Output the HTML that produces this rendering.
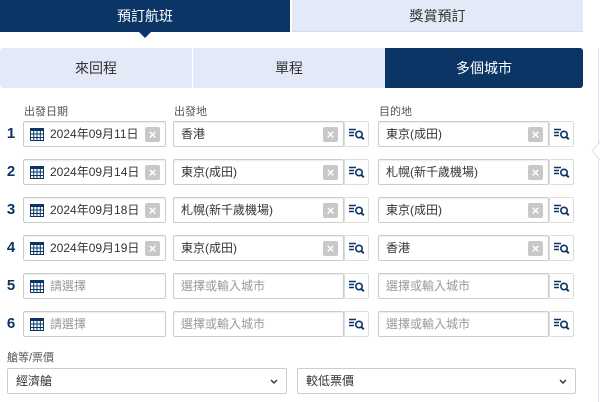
<!DOCTYPE html>
<html><head><meta charset="utf-8"><style>
*{box-sizing:border-box;margin:0;padding:0}
body{width:600px;height:402px;overflow:hidden;background:#fff;font-family:"Liberation Sans","Noto Sans CJK TC",sans-serif;position:relative;color:#333}
.a{position:absolute}
.tab1{left:0;top:0;width:290px;height:32px;background:#0b3565;color:#fff;font-size:14px;text-align:center;line-height:32px}
.tab2{left:292px;top:0;width:291px;height:32px;background:#e3e9f7;color:#333;font-size:14px;text-align:center;line-height:32px;border-bottom:1px solid #d3dbec}
.tri{left:139px;top:32px;width:0;height:0;border-left:6px solid transparent;border-right:6px solid transparent;border-top:6px solid #0b3565}
.seg{top:48px;height:40px;line-height:40px;text-align:center;font-size:14px;background:#e3e9f7;color:#333}
.sel{background:#0b3565;color:#fff;border-radius:0 3px 3px 0}
.edge{left:598px;top:48px;width:2px;height:354px;border-left:1px solid #dde2ea}
.lbl{font-size:11px;color:#555}
.num{font-size:15px;color:#0b3565;font-weight:bold;width:12px;text-align:center;left:5px}
.box{height:26px;border:1px solid #ccc;border-radius:2px;font-size:12px;line-height:24px;color:#333;background:#fff;box-shadow:inset 0 1px 1px rgba(0,0,0,.08)}
.ph{color:#999}
.x{position:absolute;right:5px;top:5px;width:15px;height:15px;background:#c8c8c8;border-radius:2px;color:#fff;font-size:13px;line-height:15px;text-align:center;font-weight:bold}
.btn{width:25px;height:26px;border:1px solid #ddd;border-radius:2px;background:#fff}
.cal{position:absolute;left:6px;top:6px}
.sel2{height:26px;border:1px solid #ccc;border-radius:2px;font-size:12px;line-height:24px;padding-left:8px;color:#333}
.chev{position:absolute;right:8px;top:10px}
</style></head><body>
<div class="a tab1">預訂航班</div>
<div class="a tab2">獎賞預訂</div>
<div class="a tri"></div>
<div class="a seg" style="left:0;width:192px;border-radius:3px 0 0 3px">來回程</div>
<div class="a seg" style="left:193px;width:192px">單程</div>
<div class="a seg sel" style="left:385px;width:198px">多個城市</div>
<div class="a edge"></div>
<svg class="a" style="left:590px;top:142px" width="10" height="18"><path d="M10 0 L2 9 L10 18" fill="#fff" stroke="#dde2ea"/></svg>
<div class="a lbl" style="left:24px;top:103px">出發日期</div>
<div class="a lbl" style="left:174px;top:103px">出發地</div>
<div class="a lbl" style="left:379px;top:103px">目的地</div>
<svg width="0" height="0" style="position:absolute"><defs>
<g id="cal"><rect x="0.5" y="0.5" width="13" height="12" fill="none" stroke="#0b3565"/><rect x="0" y="0" width="14" height="3" fill="#0b3565"/><path d="M3.7 0v13M7 0v13M10.3 0v13M0 6h14M0 9.5h14" stroke="#0b3565"/></g>
<g id="srch"><path d="M0 1.5h7M0 4.5h5M0 7.5h5" stroke="#0b3565" stroke-width="1.4"/><circle cx="10" cy="6.5" r="3.2" fill="none" stroke="#0b3565" stroke-width="1.6"/><path d="M12.3 8.8l2.5 2.5" stroke="#0b3565" stroke-width="2"/></g>
<path id="chv" d="M1 1l3 3 3-3" fill="none" stroke="#333" stroke-width="1.4"/>
</defs></svg>

<div class="a num" style="top:125px">1</div>
<div class="a box" style="left:23px;top:121px;width:143px;padding-left:26px"><svg class="cal" width="14" height="13"><use href="#cal"/></svg>2024年09月11日<span class="x">×</span></div>
<div class="a box" style="left:173px;top:121px;width:171px;padding-left:7px">香港<span class="x">×</span></div>
<div class="a btn" style="left:344px;top:121px"><svg style="margin:6px 0 0 4px" width="16" height="13"><use href="#srch"/></svg></div>
<div class="a box" style="left:378px;top:121px;width:171px;padding-left:7px">東京(成田)<span class="x">×</span></div>
<div class="a btn" style="left:549px;top:121px"><svg style="margin:6px 0 0 4px" width="16" height="13"><use href="#srch"/></svg></div>

<div class="a num" style="top:163px">2</div>
<div class="a box" style="left:23px;top:159px;width:143px;padding-left:26px"><svg class="cal" width="14" height="13"><use href="#cal"/></svg>2024年09月14日<span class="x">×</span></div>
<div class="a box" style="left:173px;top:159px;width:171px;padding-left:7px">東京(成田)<span class="x">×</span></div>
<div class="a btn" style="left:344px;top:159px"><svg style="margin:6px 0 0 4px" width="16" height="13"><use href="#srch"/></svg></div>
<div class="a box" style="left:378px;top:159px;width:171px;padding-left:7px">札幌(新千歲機場)<span class="x">×</span></div>
<div class="a btn" style="left:549px;top:159px"><svg style="margin:6px 0 0 4px" width="16" height="13"><use href="#srch"/></svg></div>

<div class="a num" style="top:201px">3</div>
<div class="a box" style="left:23px;top:197px;width:143px;padding-left:26px"><svg class="cal" width="14" height="13"><use href="#cal"/></svg>2024年09月18日<span class="x">×</span></div>
<div class="a box" style="left:173px;top:197px;width:171px;padding-left:7px">札幌(新千歲機場)<span class="x">×</span></div>
<div class="a btn" style="left:344px;top:197px"><svg style="margin:6px 0 0 4px" width="16" height="13"><use href="#srch"/></svg></div>
<div class="a box" style="left:378px;top:197px;width:171px;padding-left:7px">東京(成田)<span class="x">×</span></div>
<div class="a btn" style="left:549px;top:197px"><svg style="margin:6px 0 0 4px" width="16" height="13"><use href="#srch"/></svg></div>

<div class="a num" style="top:239px">4</div>
<div class="a box" style="left:23px;top:235px;width:143px;padding-left:26px"><svg class="cal" width="14" height="13"><use href="#cal"/></svg>2024年09月19日<span class="x">×</span></div>
<div class="a box" style="left:173px;top:235px;width:171px;padding-left:7px">東京(成田)<span class="x">×</span></div>
<div class="a btn" style="left:344px;top:235px"><svg style="margin:6px 0 0 4px" width="16" height="13"><use href="#srch"/></svg></div>
<div class="a box" style="left:378px;top:235px;width:171px;padding-left:7px">香港<span class="x">×</span></div>
<div class="a btn" style="left:549px;top:235px"><svg style="margin:6px 0 0 4px" width="16" height="13"><use href="#srch"/></svg></div>

<div class="a num" style="top:277px">5</div>
<div class="a box ph" style="left:23px;top:273px;width:143px;padding-left:26px"><svg class="cal" width="14" height="13"><use href="#cal"/></svg>請選擇</div>
<div class="a box ph" style="left:173px;top:273px;width:171px;padding-left:7px">選擇或輸入城市</div>
<div class="a btn" style="left:344px;top:273px"><svg style="margin:6px 0 0 4px" width="16" height="13"><use href="#srch"/></svg></div>
<div class="a box ph" style="left:378px;top:273px;width:171px;padding-left:7px">選擇或輸入城市</div>
<div class="a btn" style="left:549px;top:273px"><svg style="margin:6px 0 0 4px" width="16" height="13"><use href="#srch"/></svg></div>

<div class="a num" style="top:315px">6</div>
<div class="a box ph" style="left:23px;top:311px;width:143px;padding-left:26px"><svg class="cal" width="14" height="13"><use href="#cal"/></svg>請選擇</div>
<div class="a box ph" style="left:173px;top:311px;width:171px;padding-left:7px">選擇或輸入城市</div>
<div class="a btn" style="left:344px;top:311px"><svg style="margin:6px 0 0 4px" width="16" height="13"><use href="#srch"/></svg></div>
<div class="a box ph" style="left:378px;top:311px;width:171px;padding-left:7px">選擇或輸入城市</div>
<div class="a btn" style="left:549px;top:311px"><svg style="margin:6px 0 0 4px" width="16" height="13"><use href="#srch"/></svg></div>

<div class="a lbl" style="left:7px;top:349px">艙等/票價</div>
<div class="a sel2" style="left:7px;top:368px;width:280px">經濟艙<svg class="chev" width="8" height="6"><use href="#chv"/></svg></div>
<div class="a sel2" style="left:297px;top:368px;width:279px">較低票價<svg class="chev" width="8" height="6"><use href="#chv"/></svg></div>
</body></html>
